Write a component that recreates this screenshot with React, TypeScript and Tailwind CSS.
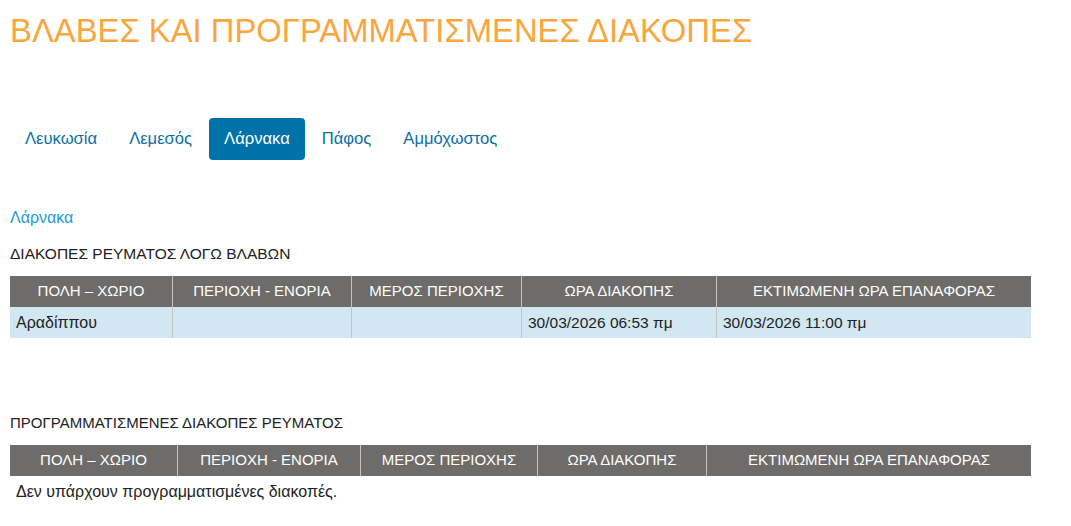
import React from 'react';

const tabs = ['Λευκωσία', 'Λεμεσός', 'Λάρνακα', 'Πάφος', 'Αμμόχωστος'];

const faultCols = [
  { label: 'ΠΟΛΗ – ΧΩΡΙΟ', w: 'w-[162px]' },
  { label: 'ΠΕΡΙΟΧΗ - ΕΝΟΡΙΑ', w: 'w-[179px]' },
  { label: 'ΜΕΡΟΣ ΠΕΡΙΟΧΗΣ', w: 'w-[170px]' },
  { label: 'ΩΡΑ ΔΙΑΚΟΠΗΣ', w: 'w-[195px]' },
  { label: 'ΕΚΤΙΜΩΜΕΝΗ ΩΡΑ ΕΠΑΝΑΦΟΡΑΣ', w: 'w-[315px]' },
];

const plannedCols = [
  { label: 'ΠΟΛΗ – ΧΩΡΙΟ', w: 'w-[167px]' },
  { label: 'ΠΕΡΙΟΧΗ - ΕΝΟΡΙΑ', w: 'w-[183px]' },
  { label: 'ΜΕΡΟΣ ΠΕΡΙΟΧΗΣ', w: 'w-[177px]' },
  { label: 'ΩΡΑ ΔΙΑΚΟΠΗΣ', w: 'w-[169px]' },
  { label: 'ΕΚΤΙΜΩΜΕΝΗ ΩΡΑ ΕΠΑΝΑΦΟΡΑΣ', w: 'w-[325px]' },
];

const faults = [
  ['Αραδίππου', '', '', '30/03/2026 06:53 πμ', '30/03/2026 11:00 πμ'],
];

function HeaderRow({ cols }: { cols: { label: string; w: string }[] }) {
  return (
    <div className="flex h-[31px] bg-[#6d6c6a] text-white text-[15px]">
      {cols.map((c, i) => (
        <div
          key={c.label}
          className={`${c.w} flex items-center justify-center ${i > 0 ? 'border-l border-[#c4c4c4]' : ''}`}
        >
          {c.label}
        </div>
      ))}
    </div>
  );
}

export default function App() {
  return (
    <div className="w-[1071px] h-[526px] bg-white overflow-hidden font-['Liberation_Sans',sans-serif] text-[15px] text-[#222]">
      {/* Title */}
      <h1 className="pl-[10px] pt-[11px] text-[32.8px] leading-[40px] text-[#f8a63e]">
        ΒΛΑΒΕΣ ΚΑΙ ΠΡΟΓΡΑΜΜΑΤΙΣΜΕΝΕΣ ΔΙΑΚΟΠΕΣ
      </h1>

      {/* City tabs */}
      <ul className="flex gap-[2px] pl-[10px] mt-[67px]">
        {tabs.map((t) => (
          <li
            key={t}
            className={`h-[42px] px-[15px] flex items-center text-[16.6px] rounded-[4px] ${
              t === 'Λάρνακα' ? 'bg-[#0071a9] text-white' : 'text-[#0a6fa6]'
            }`}
          >
            {t}
          </li>
        ))}
      </ul>

      <div className="pl-[10px] pr-[40px]">
        <div className="mt-[48px] text-[16px] text-[#1d9ad6] leading-[20px]">Λάρνακα</div>
        <div className="mt-[16px] text-[15.5px] leading-[20px]">ΔΙΑΚΟΠΕΣ ΡΕΥΜΑΤΟΣ ΛΟΓΩ ΒΛΑΒΩΝ</div>

        {/* Faults table */}
        <div className="mt-[12px] w-[1021px]">
          <HeaderRow cols={faultCols} />
          {faults.map((row, r) => (
            <div key={r} className="flex h-[31px] bg-[#d2e7f2] text-[15.5px]">
              {row.map((cell, i) => (
                <div
                  key={i}
                  className={`${faultCols[i].w} flex items-center pl-[6px] ${i === 0 ? 'text-[16px]' : ''} ${i > 0 ? 'border-l border-[#c4c4c4]' : ''}`}
                >
                  {cell}
                </div>
              ))}
            </div>
          ))}
        </div>

        <div className="mt-[75px] leading-[20px]">ΠΡΟΓΡΑΜΜΑΤΙΣΜΕΝΕΣ ΔΙΑΚΟΠΕΣ ΡΕΥΜΑΤΟΣ</div>

        {/* Planned table */}
        <div className="mt-[12px] w-[1021px]">
          <HeaderRow cols={plannedCols} />
          <div className="pl-[6px] pt-[6px] text-[16px] leading-[20px]">Δεν υπάρχουν προγραμματισμένες διακοπές.</div>
        </div>
      </div>
    </div>
  );
}
